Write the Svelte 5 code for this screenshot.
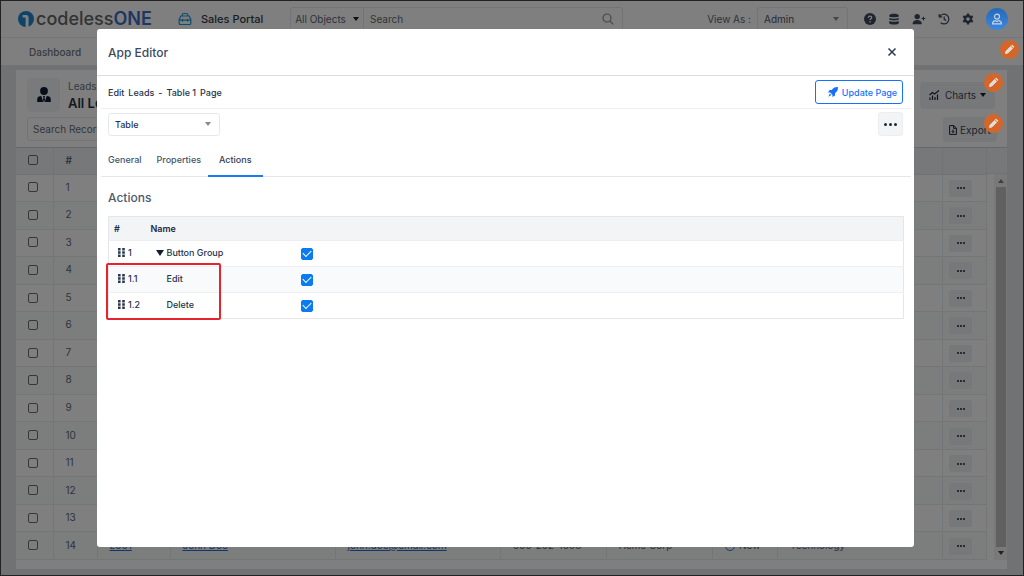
<script>
  const rows = Array.from({ length: 14 }, (_, i) => i + 1);
  let actions = $state([
    { id: '1', name: 'Button Group', group: true, on: true },
    { id: '1.1', name: 'Edit', group: false, on: true },
    { id: '1.2', name: 'Delete', group: false, on: true }
  ]);
  const tabs = ['General', 'Properties', 'Actions'];
  let active = $state('Actions');
</script>

{#snippet pencil()}
  <svg viewBox="0 0 19 19" width="19" height="19" aria-hidden="true">
    <path d="M5.4 13.6l.5-2.400 4.700-4.700 1.900 1.900-4.700 4.700zM11.400 5.700l.7-.7 1.900 1.900-.7.7z" fill="#e4dcd8" stroke="#e4dcd8" stroke-width=".9" stroke-linejoin="round" />
  </svg>
{/snippet}

<div class="page">
  <header class="topbar">
    <a class="logo" href="#home" aria-label="codelessONE">
      <svg viewBox="0 0 16 16" width="16" height="16" aria-hidden="true">
        <circle cx="8" cy="8" r="8" fill="#1f86d0" />
        <path d="M4.600 4h3.600a2.400 2.400 0 0 1 2.400 2.400V16H7.600V6.600H4.600z" fill="#fff" />
      </svg>
      <span class="brand">codeless<b>ONE</b></span>
    </a>
    <a class="portal" href="#portal">
      <svg viewBox="0 0 14 14" width="14" height="14" fill="none" stroke="#1d9be0" stroke-width="1.2" aria-hidden="true">
        <path d="M4.2 4V2.9c0-.8.6-1.4 1.4-1.4h2.8c.8 0 1.4.6 1.4 1.4V4" />
        <path d="M2.8 4h8.4l1.6 3.4v4.1a1 1 0 0 1-1 1H2.200a1 1 0 0 1-1-1V7.400zM1.200 8.200h11.600M4.500 6.800v2.800M9.500 6.800v2.800" />
      </svg>
      Sales Portal
    </a>
    <div class="search">
      <button class="scope">All Objects <i class="caret"></i></button>
      <input type="search" placeholder="Search" aria-label="Search" />
      <svg viewBox="0 0 12 12" width="12" height="12" fill="none" stroke="#8b8f96" stroke-width="1.200" aria-hidden="true">
        <circle cx="5" cy="5" r="4" /><path d="M8 8l3.300 3.300" />
      </svg>
    </div>
    <div class="view">
      <label for="role">View As :</label>
      <span class="pick role">
        <select id="role"><option>Admin</option></select>
        <i class="caret soft"></i>
      </span>
    </div>
    <nav class="tools" aria-label="Tools">
      <button aria-label="Help">
        <svg viewBox="0 0 12 12" width="12" height="12"><circle cx="6" cy="6" r="6" fill="#3d4a5f" /><path d="M4.400 4.700c0-2.100 3.300-2.100 3.300-.1 0 1.200-1.600 1.200-1.600 2.500" fill="none" stroke="#fff" stroke-width="1.300" /><circle cx="6.100" cy="8.800" r=".8" fill="#fff" /></svg>
      </button>
      <button aria-label="Data">
        <svg viewBox="0 0 12 12" width="12" height="12" fill="#3d4a5f"><path d="M1.200 2.300C1.200.2 10.800.2 10.800 2.300v1C10.800 4.700 1.200 4.700 1.200 3.300zM1.200 4.900c1.500 1.100 8.100 1.100 9.600 0v1.400c0 1.500-9.600 1.500-9.600 0zM1.200 8c1.500 1.100 8.100 1.100 9.600 0v2c0 2-9.600 2-9.600 0z" /></svg>
      </button>
      <button aria-label="Invite">
        <svg viewBox="0 0 14 12" width="14" height="12" fill="#3d4a5f"><circle cx="5.200" cy="3.600" r="2.700" /><path d="M.5 11.200c0-5.500 9.400-5.500 9.400 0zM10.900 3.700h1v1.300h1.400v1h-1.400v1.400h-1V6H9.500V5h1.400z" /></svg>
      </button>
      <button aria-label="History">
        <svg viewBox="0 0 12 12" width="12" height="12" fill="none" stroke="#3d4a5f" stroke-width="1.200"><path d="M1.700 3.600a4.900 4.900 0 1 1 1 6.100M1.200 1v2.900h3M6.200 3.500v2.900l2 1.100" /></svg>
      </button>
      <button aria-label="Settings">
        <svg viewBox="0 0 12 12" width="12" height="12"><circle cx="6" cy="6" r="3" fill="none" stroke="#3d4a5f" stroke-width="2.400" /><path d="M6 .4v2M6 9.600v2M1.200 3.200l1.600 1M9.200 7.800l1.600 1M1.200 8.800l1.600-1M9.200 4.200l1.600-1" stroke="#3d4a5f" stroke-width="2.200" /></svg>
      </button>
      <button class="avatar" aria-label="Account">
        <svg viewBox="0 0 12 12" width="12" height="12" fill="none" stroke="#c4d4e8" stroke-width="1.200"><circle cx="6" cy="3.600" r="2.500" /><path d="M1.600 10.800c0-1.900.9-2.900 2.600-3.200l1.800 1 1.800-1c1.700.3 2.600 1.300 2.600 3.200z" /></svg>
      </button>
    </nav>
  </header>
  <nav class="menu" aria-label="Main">
    <a href="#dashboard">Dashboard</a>
    <button class="edit" aria-label="Edit menu">{@render pencil()}</button>
  </nav>

  <main class="card">
    <div class="intro">
      <div class="emblem">
        <svg viewBox="0 0 14 16" width="14" height="16" fill="#111d33" aria-hidden="true"><circle cx="7" cy="4" r="3.900" /><path d="M4.300 9l2 6H.2v-2.800C.2 10 2 9.200 4.300 9zM9.700 9l-2 6h6.100v-2.800c0-2.200-1.800-3-4.100-3.200zM6 9h2l-.4 1.600L8 13l-1 2-1-2 .4-2.400z" /></svg>
      </div>
      <div class="heading"><span>Leads</span><h1>All Leads</h1></div>
      <div class="slot">
        <button class="gray charts">
          <svg viewBox="0 0 11 10" width="11" height="10" fill="none" stroke="#1c2538" aria-hidden="true"><path d="M.5 5l3-2.500 2 1.500L10 .6M1 10V7.500M3.500 10V5.500M6 10V7M8.500 10V4.500" stroke-width="1.200" /></svg>
          Charts <i class="caret"></i>
        </button>
        <button class="edit" aria-label="Edit charts">{@render pencil()}</button>
      </div>
    </div>
    <div class="filter">
      <input type="text" placeholder="Search Records" aria-label="Search records" />
      <div class="slot">
        <button class="gray export">
          <svg viewBox="0 0 8 10" width="8" height="10" fill="none" stroke="#2a1f3a" aria-hidden="true"><path d="M.6.6h4.200l2.600 2.500v6.300H.6zM4.600.6v2.700h2.800M4 4.500v3M2.700 6.200L4 7.600l1.300-1.400" /></svg>
          Export
        </button>
        <button class="edit" aria-label="Edit export">{@render pencil()}</button>
      </div>
    </div>
    <div class="grid">
      <table class="records">
        <colgroup>
          <col class="c-check" /><col class="c-num" /><col class="c-id" /><col class="c-name" /><col /><col class="c-phone" />
          <col class="c-phone" /><col class="c-status" /><col class="c-name" /><col class="c-more" />
        </colgroup>
        <thead>
          <tr><th><input type="checkbox" aria-label="Select all" /></th><th>#</th><th></th><th></th><th></th><th></th><th></th><th></th><th></th><th></th></tr>
        </thead>
        <tbody>
          {#each rows as n}
            <tr>
              <td><input type="checkbox" aria-label={`Select ${n}`} /></td>
              <td>{n}</td>
              <td><a href="#lead">L001</a></td>
              <td><a href="#lead">John Doe</a></td>
              <td><a href="#mail">john.doe@email.com</a></td>
              <td>505-252-1098</td>
              <td>Acme Corp</td>
              <td><span class="status"></span>New</td>
              <td>Technology</td>
              <td><button class="dots" aria-label={`More ${n}`}><i></i><i></i><i></i></button></td>
            </tr>
          {/each}
        </tbody>
      </table>
      <div class="gutter" aria-hidden="true">
        <div class="gutter-head"></div>
        <div class="rail"><i class="up"></i><div class="thumb"></div><i class="down"></i></div>
      </div>
    </div>
  </main>
</div>

<div class="shade"></div>

<div class="stage">
  <div class="modal" role="dialog" aria-modal="true" aria-labelledby="dlg">
    <div class="title">
      <h2 id="dlg">App Editor</h2>
      <button class="close" aria-label="Close">
        <svg viewBox="0 0 10 10" width="10" height="10"><path d="M1.500 1.500l7 7M8.500 1.500l-7 7" stroke="#2c3a52" stroke-width="1.500" /></svg>
      </button>
    </div>
    <div class="body">
      <div class="context">
        <p><span>Edit</span><span>Leads</span><span>-</span><span>Table 1</span><span>Page</span></p>
        <button class="update">
          <svg viewBox="0 0 10 10" width="10" height="10" fill="#1570ff" aria-hidden="true"><path d="M9.900.1C6.900-.1 5.200.9 3.800 3H1.600L0 5.500l2.200.1 2.200 2.200.1 2.200L7 8.400V6.200C9.100 4.800 10.100 3.100 9.900.1zM1.900 6.600L.3 9.700l3.100-1.600z" /></svg>
          Update Page
        </button>
      </div>
      <div class="choice">
        <span class="pick kind">
          <select aria-label="Component"><option>Table</option></select>
          <i class="caret soft"></i>
        </span>
        <button class="more" aria-label="More"><i></i><i></i><i></i></button>
      </div>
      <div class="tabs" role="tablist">
        {#each tabs as tab}
          <button role="tab" aria-selected={active === tab} class:on={active === tab} onclick={() => (active = tab)}>{tab}</button>
        {/each}
      </div>
      <section>
        <h3>Actions</h3>
        <div class="framed">
          <table class="actions">
            <thead><tr><th class="w-id">#</th><th class="w-name">Name</th><th></th></tr></thead>
            <tbody>
              {#each actions as a}
                <tr>
                  <td>
                    <span class="order">
                      <svg viewBox="0 0 7 9" width="7" height="9" fill="#2b3850" aria-hidden="true"><path d="M0 0h2.600v2.400H0zM4.200 0h2.600v2.400H4.200zM0 3.300h2.600v2.400H0zM4.200 3.300h2.600v2.400H4.200zM0 6.600h2.600V9H0zM4.200 6.600h2.600V9H4.200z" /></svg>
                      {a.id}
                    </span>
                  </td>
                  <td><span class="name">{#if a.group}<i class="caret"></i>{/if}<span>{a.name}</span></span></td>
                  <td><input type="checkbox" bind:checked={a.on} aria-label={`Show ${a.name}`} /></td>
                </tr>
              {/each}
            </tbody>
          </table>
          <div class="marker"></div>
        </div>
      </section>
    </div>
  </div>
</div>

<style>
  :global(body) { font-family: Inter, "Liberation Sans", sans-serif; font-size: 10px; color: #3b4659; }
  :global(*) { box-sizing: border-box; }
  h1, h2, h3, p { margin: 0; }
  button, input, select { font: inherit; color: inherit; margin: 0; }
  button { background: none; border: 0; padding: 0; display: inline-flex; align-items: center; justify-content: center; }
  a { color: inherit; text-decoration: none; }
  svg { display: block; flex: none; }
  .caret { flex: none; border: 3px solid transparent; border-top: 4px solid #121d33; border-bottom: 0; }
  .caret.soft { border-top-color: #858b96; }

  .page { height: 100vh; display: flex; flex-direction: column; background: #e1e4e9; border: 1px solid #444; overflow: hidden; }
  .topbar { flex: none; height: 37px; display: flex; align-items: center; background: #fff; border-bottom: 1px solid #e8eaee; padding: 0 15px 0 17px; }
  .logo { display: flex; align-items: center; gap: 2px; width: 160px; }
  .brand { font-size: 18px; font-weight: 500; color: #666; line-height: 20px; }
  .brand b { font-weight: 600; color: #3b6fc4; }
  .portal { display: flex; align-items: center; gap: 9px; width: 112px; font-size: 11px; font-weight: 500; color: #303c50; }
  .search { flex: 1; height: 24px; display: flex; align-items: center; border: 1px solid #e5e8ee; border-radius: 3px; padding-right: 8px; }
  .scope { width: 73px; height: 100%; gap: 7px; border-right: 1px solid #e5e8ee; color: #5d6675; }
  .search input { flex: 1; min-width: 0; border: 0; outline: 0; background: none; padding: 0 6px; }
  input::placeholder { color: #666d79; opacity: 1; }
  .view { display: flex; align-items: center; gap: 6px; margin-left: 84px; color: #5d6675; }
  .pick { display: flex; align-items: center; border: 1px solid #e5e8ee; border-radius: 3px; padding-right: 8px; }
  .pick select { flex: 1; min-width: 0; appearance: none; border: 0; outline: 0; background: none; padding: 0 6px; }
  .role { width: 91px; height: 24px; color: #4c5667; }
  .tools { display: flex; align-items: center; gap: 12px; margin-left: 16px; }
  .tools .avatar { width: 22px; height: 22px; border-radius: 50%; background: linear-gradient(#2468b8, #3f88dc); position: relative; z-index: 2; }
  .menu { flex: none; position: relative; height: 27px; display: flex; align-items: center; background: #fff; padding: 0 28px; color: #6e7683; font-weight: 500; }
  .edit { position: absolute; z-index: 2; width: 19px; height: 19px; border-radius: 50%; background: #d5662a; }
  .menu .edit { right: 4px; top: 2px; }

  .card { flex: 1; min-height: 0; display: flex; flex-direction: column; background: #fff; margin: 5px 16px 6px 15px; padding-bottom: 9px; }
  .intro { display: flex; align-items: center; padding: 8px 12px 0 11px; gap: 8px; }
  .emblem { width: 33px; height: 34px; border-radius: 4px; background: #f3f4f6; display: grid; place-items: center; }
  .heading { flex: 1; color: #6b7280; line-height: 16px; }
  h1 { font-size: 13px; line-height: 18px; font-weight: 600; color: #2b3342; }
  .slot { position: relative; }
  .gray { background: #eff1f4; border-radius: 3px; color: #3b4659; }
  .charts { width: 75px; height: 27px; gap: 4px; }
  .charts svg { margin-right: 1px; }
  .export { width: 54px; height: 25px; gap: 3px; }
  .slot .edit { top: -9px; right: -8px; }
  .filter .slot .edit { top: -3px; right: -6px; }
  .filter { display: flex; justify-content: space-between; padding: 5px 10px 5px 11px; }
  .filter input { width: 240px; height: 24px; border: 1px solid #e5e8ee; border-radius: 3px; background: none; padding: 0 5px; }
  .grid { flex: 1; min-height: 0; display: flex; border-top: 1px solid #cdd2da; }
  .records { flex: 1; height: 100%; min-width: 0; table-layout: fixed; border-collapse: collapse; color: #5f6875; }
  .records th { height: 26px; background: #eff1f4; border-right: 1px solid #e1e4e9; border-bottom: 1px solid #e1e4e9; padding: 0 12px 1px; text-align: left; font-weight: 600; }
  .records td { border-right: 1px solid #e8eaee; border-bottom: 1px solid #e8eaee; padding: 0 12px 2px; white-space: nowrap; }
  .records tbody tr:nth-child(even) { background: #f9fafb; }
  .records a { color: #2b6ccc; text-decoration: underline; }
  .c-check { width: 37px; }
  .c-num { width: 44px; }
  .c-id { width: 73px; }
  .c-name { width: 165px; }
  .c-phone { width: 106px; }
  .c-status { width: 65px; }
  .c-more { width: 44px; }
  .records th:first-child, .records td:first-child { padding: 0 3px 3px 0; text-align: center; }
  .records td:last-child { padding: 1px 6px 0; }
  .records input { appearance: none; display: inline-block; width: 10px; height: 10px; border: 1px solid #6b6f75; border-radius: 2px; vertical-align: middle; }
  .status { display: inline-block; width: 10px; height: 10px; border: 1px solid #2b7ad4; border-radius: 50%; margin-right: 4px; vertical-align: middle; }
  .dots { width: 23px; height: 17px; background: #eff1f4; border-radius: 2px; gap: 1px; vertical-align: middle; }
  .dots i { width: 2px; height: 2px; background: #1f2937; border-radius: 50%; }
  .gutter { width: 20px; display: flex; flex-direction: column; }
  .gutter-head { height: 26px; background: #eff1f4; border-bottom: 1px solid #e1e4e9; }
  .rail { flex: 1; width: 13px; margin-left: 7px; display: flex; flex-direction: column; align-items: center; background: #f3f3f3; padding: 5px 0; gap: 4px; }
  .thumb { flex: 1; width: 10px; background: #c1c1c1; }
  .up { border: 3px solid transparent; border-bottom: 4px solid #808080; border-top: 0; }
  .down { border: 3px solid transparent; border-top: 4px solid #404040; border-bottom: 0; }

  .shade { position: fixed; inset: 0; background: rgba(0, 0, 0, 0.5); z-index: 1; }
  .stage { position: fixed; inset: 0; z-index: 3; display: flex; padding: 29px 110px 29px 97px; }
  .modal { flex: 1; min-width: 0; background: #fff; border-radius: 3px; color: #26334b; font-size: 9px; font-weight: 500; }
  .title { height: 47px; display: flex; align-items: center; justify-content: space-between; border-bottom: 1px solid #dcdee2; padding: 0 17px 0 11px; }
  h2 { font-size: 12px; font-weight: 500; color: #3d4960; }
  .close { width: 10px; height: 10px; }
  .body { padding: 0 3px 0 4px; }
  .context { height: 33px; display: flex; align-items: center; justify-content: space-between; border-bottom: 1px solid #eceef1; padding: 0 8px 0 7px; }
  .context p { display: flex; gap: 4px; }
  .update { width: 88px; height: 24px; gap: 4px; padding-left: 7px; border: 1px solid #1570ff; border-radius: 3px; color: #1570ff; }
  .choice { display: flex; align-items: center; justify-content: space-between; padding: 3px 8px 0 7px; }
  .kind { width: 112px; height: 23px; }
  .more { width: 25px; height: 24px; gap: 2px; background: #f3f4f6; border: 1px solid #eceef1; border-radius: 3px; }
  .more i { width: 3px; height: 3px; border-radius: 50%; background: #1c2840; }
  .tabs { display: flex; height: 41px; border-bottom: 1px solid #e4e6ea; padding: 7px 0 0 7px; gap: 3px; }
  .tabs button { padding: 0 4px 0 8px; height: 34px; color: #44546a; border-bottom: 2px solid transparent; }
  .tabs button:first-child { padding-left: 0; }
  .tabs button.on { padding: 0 11px; border-bottom-color: #1b7cf2; color: #2f3c54; }
  section { padding: 13px 7px 0; }
  h3 { font-size: 12px; line-height: 16px; font-weight: 500; color: #4b5a70; }
  .framed { position: relative; margin-top: 10px; }
  .actions { width: 100%; table-layout: fixed; border-collapse: collapse; border: 1px solid #e4e6ea; }
  .actions th { height: 24px; background: #f3f4f6; text-align: left; font-weight: 600; padding: 0 5px; color: #1e2a40; }
  .actions td { height: 26px; padding: 0 5px; border-top: 1px solid #eceef1; }
  .actions tbody tr:nth-child(2) { background: #f9fafc; }
  .w-id { width: 37px; }
  .w-name { width: 150px; }
  .order { display: flex; align-items: center; gap: 3px; padding: 0 0 2px 4px; }
  .name { display: grid; grid-template-columns: 11px 1fr; align-items: center; padding: 0 0 2px 5px; }
  .name .caret { border-width: 6px 4px 0; justify-self: start; }
  .name span { grid-column: 2; }
  .actions input { appearance: none; display: grid; place-items: center; width: 12px; height: 12px; border: 1px solid #9aa3b0; border-radius: 2px; }
  .actions input:checked { background: #0b7bf0; border-color: #0b7bf0; }
  .actions input:checked::after { content: ""; width: 7px; height: 4px; border: solid #fff; border-width: 0 0 1px 1px; transform: translateY(-1px) rotate(-45deg); }
  .marker { position: absolute; left: -2px; top: 47px; width: 115px; height: 57px; border: 2px solid #e5242b; border-radius: 2px; pointer-events: none; }
</style>
